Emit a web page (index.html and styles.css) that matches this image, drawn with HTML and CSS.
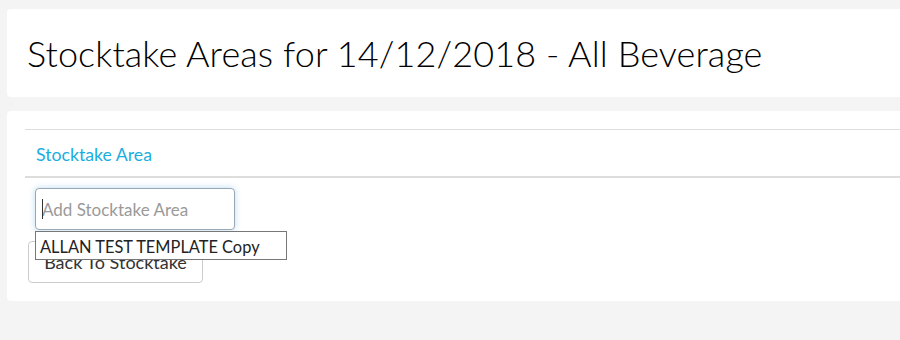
FILE: index.html
```html
<!DOCTYPE html>
<html>
<head>
<meta charset="utf-8">
<link rel="stylesheet" href="styles.css">
</head>
<body>
<div class="page">
  <div class="card title-card">
    <h1 class="title">Stocktake Areas for 14/12/2018 - All Beverage</h1>
  </div>
  <div class="card main-card">
    <div class="table-head">
      <span class="th">Stocktake Area</span>
    </div>
    <div class="add-wrap">
      <input class="add-input" type="text" placeholder="Add Stocktake Area">
      <span class="caret"></span>
      <div class="suggest">ALLAN TEST TEMPLATE Copy</div>
    </div>
    <button class="back-btn">Back To Stocktake</button>
  </div>
</div>
</body>
</html>
```
FILE: styles.css
```css
html, body {
  margin: 0;
  padding: 0;
  background: #f4f4f4;
  font-family: Lato, "Open Sans", sans-serif;
  overflow: hidden;
}
.page {
  padding: 9px 0 0 7px;
  width: 905px;
}
.card {
  background: #fff;
  border-radius: 4px;
}
.title-card {
  height: 88px;
  display: flex;
  align-items: center;
  padding-left: 20px;
  box-sizing: border-box;
}
.title {
  margin: 0;
  font-weight: 300;
  font-size: 36px;
  color: #000;
  letter-spacing: 0.1px;
}
.main-card {
  margin-top: 14px;
  height: 190px;
  box-sizing: border-box;
  padding: 18px 0 0 18px;
}
.table-head {
  border-top: 1px solid #ddd;
  border-bottom: 2px solid #ddd;
  height: 46px;
  display: flex;
  align-items: center;
  padding-left: 11px;
}
.th {
  color: #1aaee0;
  font-size: 17.7px;
  padding-top: 2px;
}
.add-wrap {
  position: relative;
  margin: 10px 0 0 10px;
  width: 200px;
  height: 42px;
}
.add-input {
  box-sizing: border-box;
  width: 200px;
  height: 42px;
  border: 1px solid #9aa7b4;
  border-radius: 4px;
  box-shadow: 0 0 6px rgba(102, 175, 233, 0.45);
  padding: 0 6px;
  font-family: Lato, "Open Sans", sans-serif;
  font-size: 17px;
  color: #333;
  outline: none;
}
.add-input::placeholder {
  color: #9a9a9a;
}
.caret {
  position: absolute;
  left: 7px;
  top: 11px;
  width: 1px;
  height: 20px;
  background: #333;
}
.suggest {
  position: absolute;
  left: 0;
  top: 43px;
  width: 252px;
  height: 29px;
  box-sizing: border-box;
  border: 1px solid #777;
  background: #fff;
  font-size: 16.4px;
  color: #222;
  padding-left: 4px;
  line-height: 29px;
  z-index: 2;
  white-space: nowrap;
}
.back-btn {
  display: block;
  margin: 11px 0 0 3px;
  width: 175px;
  height: 42px;
  background: #fff;
  border: 1px solid #ccc;
  border-radius: 4px;
  font-family: Lato, "Open Sans", sans-serif;
  font-size: 18px;
  color: #333;
  padding: 0;
}
```
